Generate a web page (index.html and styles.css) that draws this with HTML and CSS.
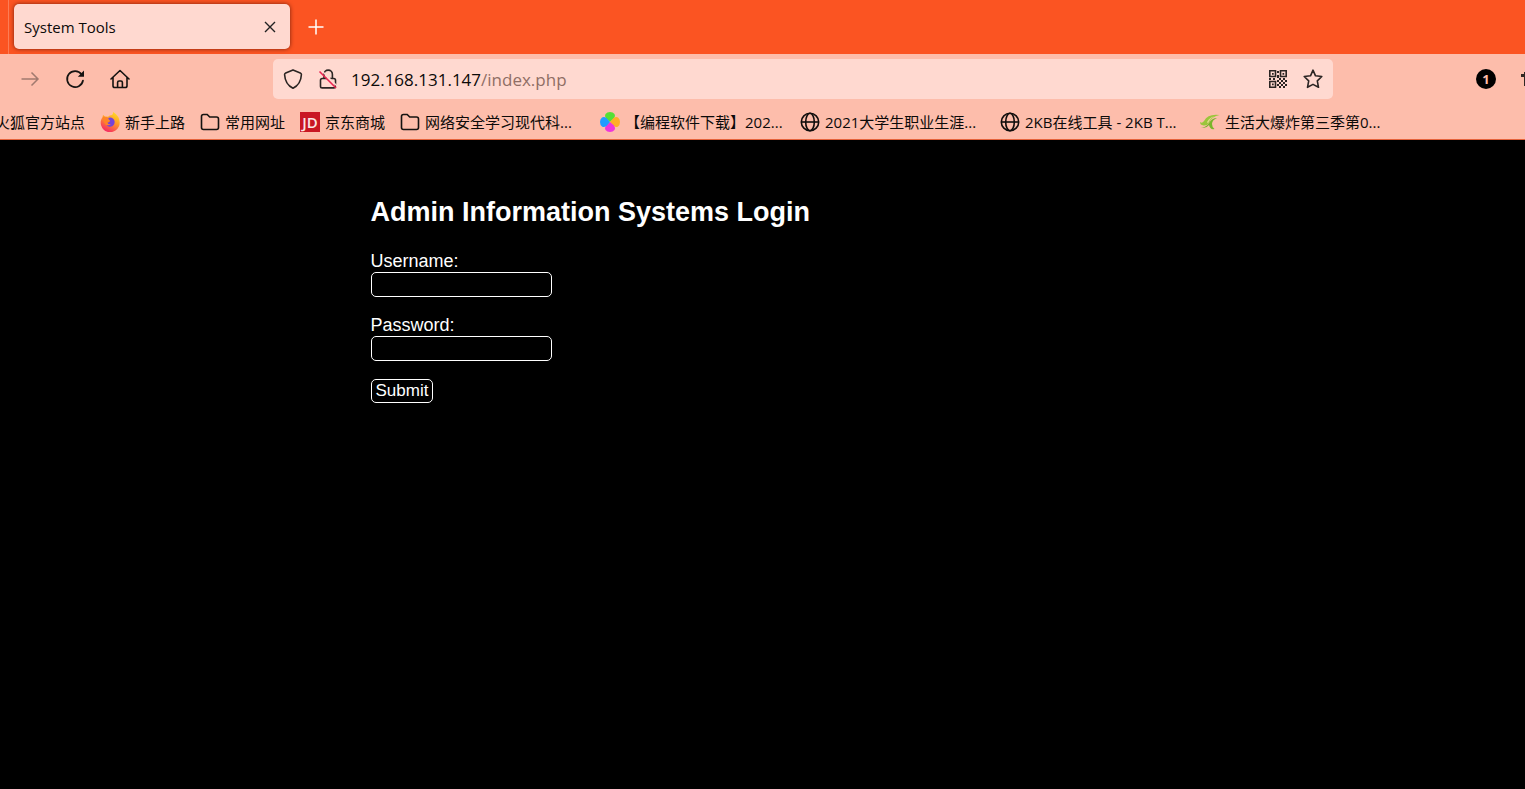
FILE: index.html
```html
<!DOCTYPE html>
<html lang="zh-CN">
<head>
<meta charset="utf-8">
<title>System Tools</title>
<link rel="stylesheet" href="styles.css">
</head>
<body>
<svg class="defs" aria-hidden="true">
  <symbol id="folder" viewBox="0 0 20 20"><path d="M1.500 15.500v-11q0-2 2-2h3.700l2.500 2.500h6.800q2 0 2 2v8.500q0 2-2 2h-13q-2 0-2-2z" fill="none" stroke="#151311" stroke-width="1.600"/></symbol>
  <symbol id="globe" viewBox="0 0 20 20"><g fill="none" stroke="#100e0d" stroke-width="1.600"><circle cx="10" cy="10" r="8.700"/><ellipse cx="10" cy="10" rx="4.300" ry="8.700"/><path d="M1.500 10h17"/></g></symbol>
</svg>
<header class="browser">
  <div class="tabs">
    <div class="tab"><span>System Tools</span>
      <button class="plain close" aria-label="Close tab"><svg width="12" height="12" viewBox="0 0 12 12"><path d="M1 1l10 10M11 1L1 11" stroke="#222" stroke-width="1.400"/></svg></button>
    </div>
    <button class="plain new-tab" aria-label="New tab"><svg width="16" height="16" viewBox="0 0 16 16"><path d="M8 .5v15M.5 8h15" stroke="#fff" stroke-width="1.500"/></svg></button>
  </div>
  <nav class="toolbar" aria-label="Navigation">
    <div class="nav-buttons">
      <button class="plain nav" aria-label="Forward" disabled><svg width="20" height="20" viewBox="0 0 20 20"><path d="M1.500 10H18M11.500 3.500L18 10l-6.500 6.500" fill="none" stroke="#a17a6f" stroke-width="1.500"/></svg></button>
      <button class="plain nav" aria-label="Reload"><svg width="20" height="20" viewBox="0 0 20 20"><path d="M16.500 5.200A8 8 0 1 0 18 11.500" fill="none" stroke="#151311" stroke-width="1.700" stroke-linecap="round"/><path d="M19 1.500v6.200h-6.200z" fill="#151311"/></svg></button>
      <button class="plain nav" aria-label="Home"><svg width="20" height="20" viewBox="0 0 20 20"><path d="M1 10l9-8.500 9 8.500M3 8.500v8.200q0 1.800 1.800 1.800h10.400q1.800 0 1.800-1.800V8.500M7.600 18.500v-5q0-1.500 1.500-1.500h1.800q1.500 0 1.500 1.500v5" fill="none" stroke="#151311" stroke-width="1.600" stroke-linejoin="round" stroke-linecap="round"/></svg></button>
    </div>
    <div class="urlbar">
      <svg width="20" height="20" viewBox="0 0 20 20"><path d="M10 .9l7.300 3q1.200.5 1.100 1.800C18 12.500 15.500 16.500 10 19.200 4.500 16.500 2 12.500 1.600 5.700q-.1-1.300 1.100-1.800z" fill="none" stroke="#2b2523" stroke-width="1.600" stroke-linejoin="round"/></svg>
      <svg class="lock" width="20" height="20" viewBox="0 0 20 20"><path d="M6 9.500V5.300a4.200 4.200 0 0 1 8.400 0v4.200M12 9.500h3.800q1.700 0 1.700 1.700v6q0 1.700-1.700 1.700H4.200q-1.700 0-1.700-1.700v-6q0-1.700 1.700-1.700H9" fill="none" stroke="#2b2523" stroke-width="1.600"/><path d="M3.500 1.500l16 16" stroke="#ffd9d0" stroke-width="1.500"/><path d="M1.500 2.500l16.500 16.500" stroke="#e92451" stroke-width="1.600"/></svg>
      <a class="address" href="#">192.168.131.147<span>/index.php</span></a>
      <button class="plain qr" aria-label="QR code"><svg width="18" height="18" viewBox="0 0 18 18"><g fill="none" stroke="#2b2523" stroke-width="1.600"><path d="M.8.8h5.700v5.700H.8zM11.500.8h5.700v5.700h-5.700zM.8 11.500h5.700v5.700H.8z"/></g><path d="M3 3h1.700v1.700H3zM13.500 3h1.700v1.700h-1.700zM3 13.500h1.700v1.700H3zM8 1h2v2H8zM8 5h2v3H8zM0 8h2v2H0zM4 8h2v2H4zM10 8h2v2h-2zM14 8h2v2h-2zM8 10h2v2H8zM12 10h2v2h-2zM16 10h2v2h-2zM10 12h2v2h-2zM14 12h2v2h-2zM8 14h2v2H8zM12 14h2v2h-2zM16 14h2v2h-2zM10 16h2v2h-2zM14 16h2v2h-2z" fill="#2b2523"/></svg></button>
      <button class="plain" aria-label="Bookmark this page"><svg width="20" height="20" viewBox="0 0 20 20"><path d="M10 1.200l2.500 5.600 6.300.7-4.500 4.300 1.200 6.500L10 15.400l-5.500 2.900 1.200-6.500L1.200 7.500l6.300-.7z" fill="none" stroke="#2b2523" stroke-width="1.600" stroke-linejoin="round"/></svg></button>
    </div>
    <div class="extras">
      <button class="plain count" aria-label="Notifications">1</button>
      <svg width="4" height="14" viewBox="0 0 4 14"><path d="M0 2h3V0h1v14H3V5H0z" fill="#302623"/></svg>
    </div>
  </nav>
  <nav class="bookmarks" aria-label="Bookmarks">
    <a class="cut" href="#">火狐官方站点</a>
    <a href="#"><svg viewBox="0 0 20 20"><defs><linearGradient id="flame" x1=".8" y1="0" x2=".3" y2="1"><stop stop-color="#ffe226"/><stop offset=".45" stop-color="#ff9828"/><stop offset="1" stop-color="#f52468"/></linearGradient></defs><path d="M2.600 5l.4-2 2 1.500 3 .2Q9.500 3 12 3q1-.5 1.200-3Q19.500 4 19.700 10.500A9.500 9.500 0 1 1 2.600 5z" fill="url(#flame)"/><path d="M7.500 6.500q3-2 6 .5 2 2.500.5 5.500-2 3-5.500 2Q5.500 13 5.500 9.500l3 .5 1.500-1.500z" fill="#7543d8"/><path d="M3 5l4 .2 1.800 1.600-1.800 1.500q2 .8 3.300.5-.8 1.700-2.800 2 .8 2 3.500 1.400-3 2-5.500.2Q2.500 9 3 5z" fill="#ff8327"/></svg>新手上路</a>
    <a href="#"><svg><use href="#folder"/></svg>常用网址</a>
    <a href="#"><span class="jd">JD</span>京东商城</a>
    <a class="long" href="#"><svg><use href="#folder"/></svg>网络安全学习现代科...</a>
    <a class="long" href="#"><svg viewBox="0 0 20 20"><path d="M10 10L6 6.500Q4.200 4 5.500 2 7 0 10 0t4.500 2Q15.800 4 14 6.500z" fill="#55df35"/><path d="M10 10l3.500-4Q16 4.200 18 5.500 20 7 20 10t-2 4.500Q16 15.800 13.500 14z" fill="#ffae28"/><path d="M10 10l4 3.500q1.800 2.500.5 4.500-1.500 2-4.500 2t-4.500-2Q4.200 16 6 13.500z" fill="#ed35dc"/><path d="M10 10l-3.500 4Q4 15.800 2 14.500 0 13 0 10t2-4.500Q4 4.200 6.500 6z" fill="#209cff"/></svg>【编程软件下载】202...</a>
    <a class="long" href="#"><svg><use href="#globe"/></svg>2021大学生职业生涯...</a>
    <a class="long" href="#"><svg><use href="#globe"/></svg>2KB在线工具 - 2KB T...</a>
    <a class="long" href="#"><svg viewBox="0 0 20 20"><path d="M4 9Q8 1.500 19.500 3 12 4 9 11q-2 3-5.500 2.500Q0 13 0 10q2 2 4-1z" fill="#9bc53b"/><path d="M1 15q5 1 8-4 3-5 8-5-5 2-5 6 0 3 2.500 5Q10 18 9 13q-3 4-8 2z" fill="#79b52a"/><path d="M7 10q3-5 7-5.500-4 2-6 7z" fill="#e1dc8c"/></svg>生活大爆炸第三季第0...</a>
  </nav>
</header>
<main class="page">
  <form class="login">
    <h1>Admin Information Systems Login</h1>
    <div class="field"><label for="username">Username:</label><input id="username" type="text"></div>
    <div class="field"><label for="password">Password:</label><input id="password" type="password"></div>
    <button class="submit" type="button">Submit</button>
  </form>
</main>
</body>
</html>
```
FILE: styles.css
```css
* { box-sizing: border-box; }
body {
  display: flex;
  flex-direction: column;
  min-height: 100vh;
  margin: 0;
  background: #000;
  color: #fff;
  font-family: "Liberation Sans", Arial, sans-serif;
}
.defs { display: none; }
svg { display: block; flex: none; }
a { color: inherit; text-decoration: none; }
.plain {
  display: flex;
  align-items: center;
  justify-content: center;
  padding: 0;
  border: 0;
  background: none;
}
.browser {
  overflow: hidden;
  border-bottom: 1px solid #e5633c;
  background: #fdbdab;
  color: #0c0a09;
  font-family: "Open Sans", "Noto Sans CJK SC", sans-serif;
}
.tabs {
  display: flex;
  height: 54px;
  padding-left: 8px;
  background: #fb5422;
}
.tabs::before { content: ""; width: 1px; background: #fc7d56; }
.tab {
  display: flex;
  align-items: center;
  justify-content: space-between;
  width: 276px;
  margin: 4px 0 5px 5px;
  padding: 0 14px 0 10px;
  border-radius: 5px;
  background: #ffd9d0;
  box-shadow: 0 0 4px #78200c;
  font-size: 15px;
}
.new-tab { width: 52px; }
.toolbar {
  display: flex;
  align-items: center;
  height: 50px;
}
.nav-buttons { display: flex; width: 273px; padding-left: 7px; }
.nav { width: 45px; height: 40px; }
.urlbar {
  display: flex;
  flex: 1;
  align-items: center;
  height: 40px;
  padding: 0 10px;
  border-radius: 5px;
  background: #ffd9d0;
}
.lock { margin: 0 13px 0 15px; }
.address { flex: 1; font-size: 17px; }
.address span { color: #8f6e65; }
.qr { margin-right: 16px; }
.extras {
  display: flex;
  align-items: center;
  justify-content: flex-end;
  gap: 25px;
  width: 192px;
}
.count {
  width: 20px;
  height: 20px;
  border-radius: 50%;
  background: #000;
  color: #fdbdab;
  font: bold 13px "Open Sans", sans-serif;
}
.bookmarks {
  display: flex;
  align-items: center;
  gap: 15px;
  height: 35px;
  font-size: 15px;
  line-height: 20px;
  white-space: nowrap;
}
.bookmarks a { display: flex; flex: none; align-items: center; gap: 5px; }
.bookmarks svg, .jd { width: 20px; height: 20px; }
.bookmarks .cut { justify-content: flex-end; width: 85px; }
.bookmarks .long { width: 185px; }
.jd {
  background: #c91623;
  color: #fbe5e3;
  font: 600 15px/20px "Open Sans", sans-serif;
  text-align: center;
}
.page { padding: 55px 20px; }
.login { max-width: 784px; margin: 0 auto; font-size: 18px; }
h1 { margin: 0 0 22px; font-size: 27px; line-height: 34px; }
.field { margin-bottom: 18px; }
.field label { display: block; line-height: 21px; }
.field input {
  display: block;
  width: 181px;
  height: 25px;
  padding: 2px 4px;
  border: 1px solid #fff;
  border-radius: 5px;
  background: #000;
  color: #fff;
  font: inherit;
}
.submit {
  display: block;
  height: 24px;
  padding: 0 4px;
  border: 1px solid #fff;
  border-radius: 5px;
  background: #000;
  color: #fff;
  font: 17px "Liberation Sans", Arial, sans-serif;
}
```
